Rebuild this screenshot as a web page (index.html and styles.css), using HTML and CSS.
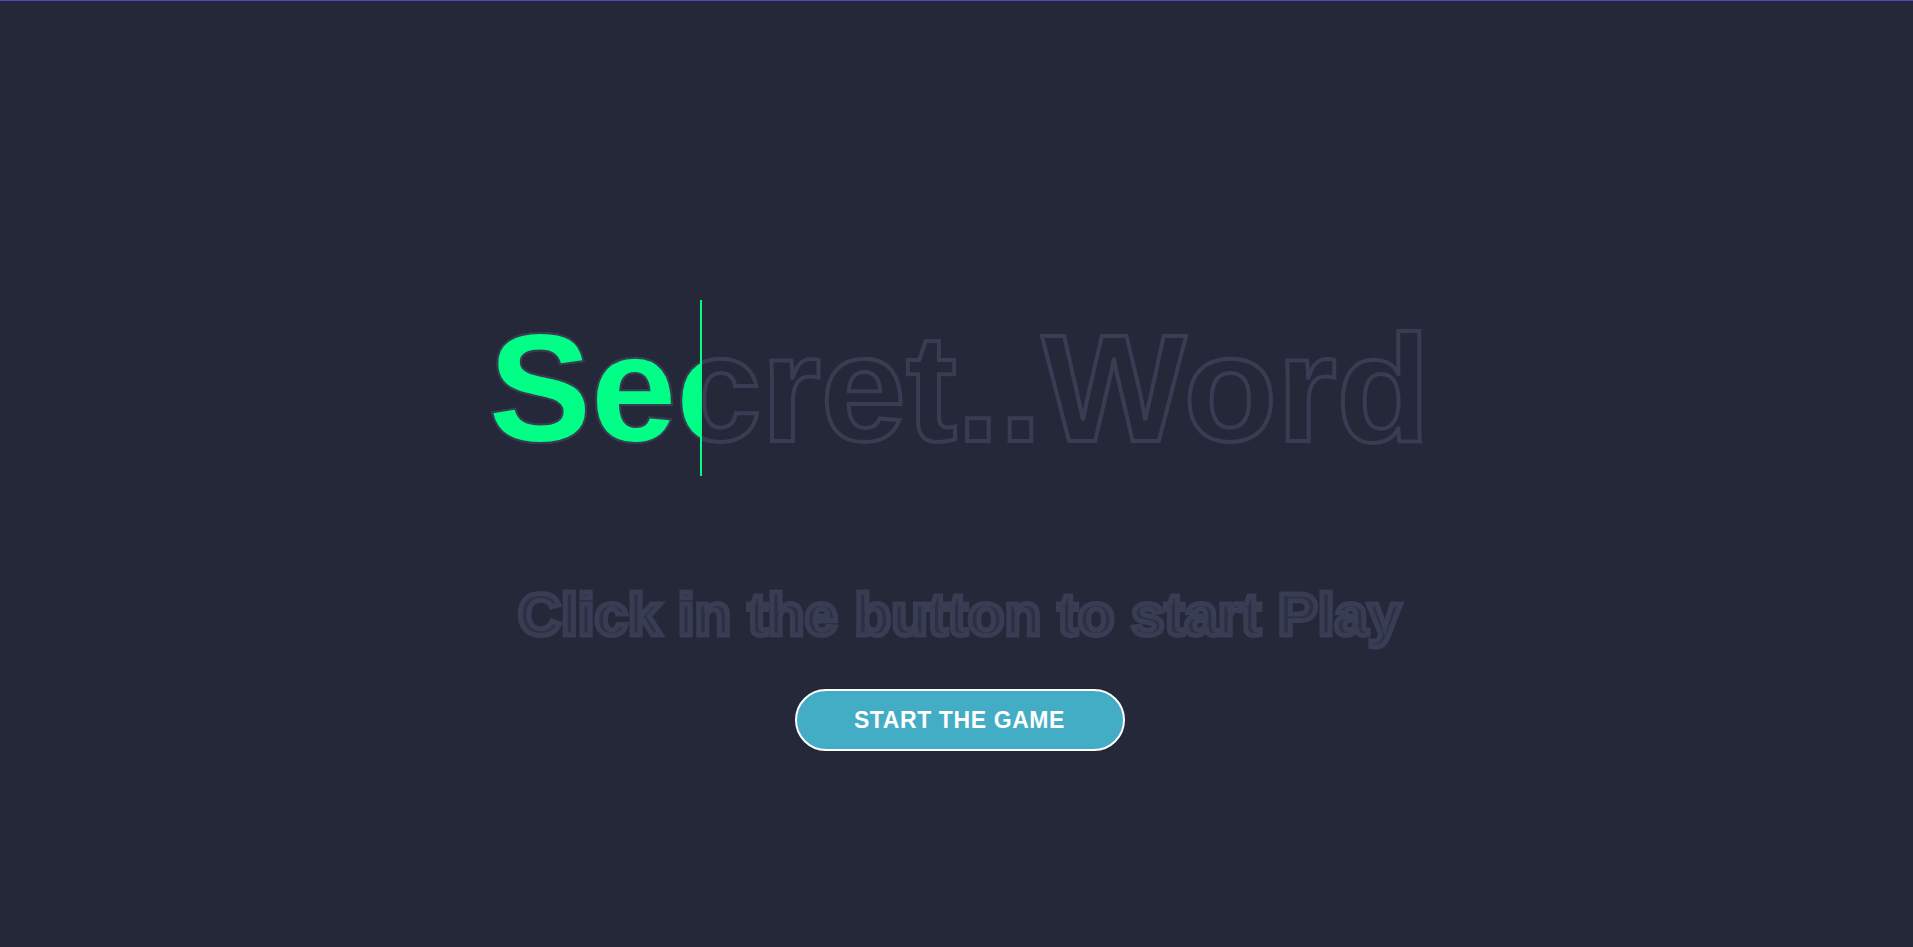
FILE: index.html
```html
<!DOCTYPE html>
<html lang="en">
<head>
<meta charset="utf-8">
<title>Secret Word</title>
<link rel="stylesheet" href="styles.css">
</head>
<body>
<div class="topbar"></div>
<main class="stage">
  <h1 class="title">Secret..Word<span class="title-fill" aria-hidden="true">Secret..Word</span></h1>
  <p class="hint">Click in the button to start Play</p>
  <button class="start" type="button">START THE GAME</button>
</main>
</body>
</html>
```

FILE: styles.css
```css
html, body {
  margin: 0;
  padding: 0;
}

body {
  background: #252839;
  font-family: "Liberation Sans", Arial, sans-serif;
  min-height: 100vh;
}

.topbar {
  height: 1px;
  background: #5b41c9;
}

.stage {
  display: flex;
  flex-direction: column;
  align-items: center;
  padding-top: 299px;
  padding-left: 6px;
}

.title {
  position: relative;
  margin: 0;
  font-size: 153px;
  font-weight: 700;
  line-height: 176px;
  white-space: nowrap;
  color: #252839;
  -webkit-text-stroke: 4px #393d53;
}

.title-fill {
  position: absolute;
  top: 0;
  left: 0;
  width: 211px;
  height: 100%;
  overflow: hidden;
  white-space: nowrap;
  color: #01fe87;
  -webkit-text-stroke: 4px #393d53;
  paint-order: stroke fill;
  border-right: 2px solid #01fe87;
}

.hint {
  margin: 104px 0 0;
  font-size: 60px;
  font-weight: 700;
  line-height: 69px;
  white-space: nowrap;
  color: #2d3044;
  -webkit-text-stroke: 5px #393d53;
}

.start {
  margin-top: 40px;
  width: 330px;
  height: 62px;
  border: 2px solid #ffffff;
  border-radius: 31px;
  background: #43adc5;
  color: #ffffff;
  font-family: "Liberation Sans", Arial, sans-serif;
  font-size: 23px;
  font-weight: 700;
  letter-spacing: 0.6px;
  padding: 0;
  cursor: pointer;
}
```
